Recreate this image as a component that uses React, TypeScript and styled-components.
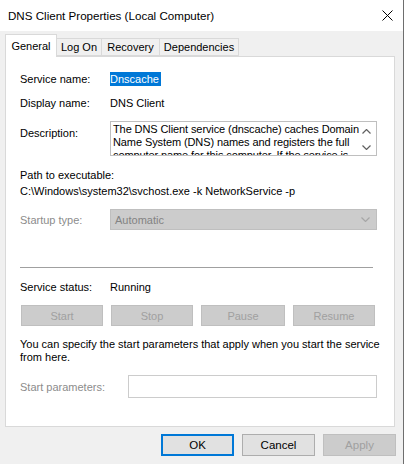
import styled, { createGlobalStyle } from "styled-components";

const GlobalStyle = createGlobalStyle`
  body {
    margin: 0;
    font-family: "Liberation Sans", Arial, sans-serif;
    font-size: 11px;
    color: #000;
  }
`;

const Window = styled.div`
  width: 403px;
  height: 464px;
  border-right: 1px solid #6e6e6e;
  background: #f0f0f0;
  display: flex;
  flex-direction: column;
  overflow: hidden;
`;

const TitleBar = styled.div`
  height: 31px;
  flex: none;
  background: #fff;
  display: flex;
  align-items: center;
  justify-content: space-between;
  padding-left: 8px;
  padding-right: 10px;
  font-size: 11.6px;
`;

const TabStrip = styled.div`
  display: flex;
  align-items: flex-end;
  height: 22px;
  margin-top: 3px;
  padding-left: 5px;
  position: relative;
  z-index: 1;
`;

const Tab = styled.div<{ $active?: boolean; $w: number }>`
  box-sizing: border-box;
  width: ${(p) => p.$w}px;
  height: ${(p) => (p.$active ? 23 : 18)}px;
  margin-bottom: ${(p) => (p.$active ? -1 : 0)}px;
  border: 1px solid #d9d9d9;
  border-bottom: ${(p) => (p.$active ? "none" : "1px solid #d9d9d9")};
  border-left: ${(p) => (p.$active ? "1px solid #d9d9d9" : "none")};
  background: ${(p) => (p.$active ? "#fff" : "#f0f0f0")};
  display: flex;
  align-items: ${(p) => (p.$active ? "flex-start" : "center")};
  padding-top: ${(p) => (p.$active ? 4 : 0)}px;
  justify-content: center;
  line-height: 14px;
`;

const Panel = styled.div`
  box-sizing: border-box;
  margin: 0 8px 0 5px;
  height: 371px;
  background: #fff;
  border: 1px solid #d9d9d9;
  padding: 15px 0 0 14px;
  display: flex;
  flex-direction: column;
`;

const Row = styled.div<{ $top?: number; $align?: string }>`
  display: flex;
  align-items: ${(p) => p.$align || "center"};
  margin-top: ${(p) => p.$top || 0}px;
  line-height: 14px;
`;

const Label = styled.div<{ $disabled?: boolean; $w?: number; $pad?: number }>`
  width: ${(p) => p.$w || 90}px;
  flex: none;
  color: ${(p) => (p.$disabled ? "#8c8c8c" : "#000")};
  padding-top: ${(p) => p.$pad || 0}px;
`;

const Selected = styled.span`
  background: #0078d7;
  color: #fff;
  padding: 0 2px 0 0;
  height: 14px;
`;

const Text = styled.div`
  line-height: 14px;
`;

const DescBox = styled.div`
  box-sizing: border-box;
  width: 267px;
  height: 35px;
  border: 1px solid #bfbfbf;
  display: flex;
  overflow: hidden;
`;

const DescText = styled.div`
  flex: 1;
  padding: 1px 0 0 2px;
  line-height: 13px;
  white-space: nowrap;
  letter-spacing: -0.1px;
  overflow: hidden;
`;

const ScrollBar = styled.div`
  width: 15px;
  flex: none;
  display: flex;
  flex-direction: column;
  justify-content: space-between;
  align-items: center;
  padding: 7px 2px 5px 0;
`;

const Combo = styled.div`
  box-sizing: border-box;
  width: 267px;
  height: 21px;
  background: #cccccc;
  border: 1px solid #bfbfbf;
  color: #838383;
  display: flex;
  align-items: center;
  justify-content: space-between;
  padding: 0 6px 0 4px;
`;

const Separator = styled.div`
  width: 353px;
  height: 1px;
  background: #a0a0a0;
  margin-top: 37px;
`;

const ButtonRow = styled.div`
  display: flex;
  gap: 8px;
  margin-top: 11px;
  padding-left: 1px;
`;

const DisabledButton = styled.div<{ $w: number }>`
  box-sizing: border-box;
  width: ${(p) => p.$w}px;
  height: 21px;
  background: #cccccc;
  border: 1px solid #bfbfbf;
  color: #a0a0a0;
  display: flex;
  align-items: center;
  justify-content: center;
`;

const Paragraph = styled.div`
  margin-top: 12px;
  line-height: 13px;
  width: 360px;
`;

const Input = styled.div`
  box-sizing: border-box;
  width: 249px;
  height: 23px;
  background: #fff;
  border: 1px solid #cccccc;
`;

const Footer = styled.div`
  display: flex;
  justify-content: flex-end;
  gap: 8px;
  padding: 7px 7px 0 0;
`;

const DialogButton = styled.div<{ $variant?: "default" | "disabled" }>`
  box-sizing: border-box;
  width: 73px;
  height: 22px;
  display: flex;
  align-items: center;
  justify-content: center;
  font-size: 11.5px;
  background: ${(p) => (p.$variant === "disabled" ? "#cccccc" : "#e1e1e1")};
  border: ${(p) =>
    p.$variant === "default"
      ? "2px solid #0078d7"
      : p.$variant === "disabled"
      ? "1px solid #bfbfbf"
      : "1px solid #adadad"};
  color: ${(p) => (p.$variant === "disabled" ? "#a0a0a0" : "#000")};
`;

const Chevron = ({ up, color }: { up?: boolean; color: string }) => (
  <svg width="9" height="5" viewBox="0 0 9 5">
    <path
      d={up ? "M0.5 4.5 L4.5 0.5 L8.5 4.5" : "M0.5 0.5 L4.5 4.5 L8.5 0.5"}
      fill="none"
      stroke={color}
      strokeWidth="1.2"
    />
  </svg>
);

export default function App() {
  return (
    <>
      <GlobalStyle />
      <Window>
        <TitleBar>
          <span>DNS Client Properties (Local Computer)</span>
          <svg width="11" height="11" viewBox="0 0 11 11">
            <path d="M0.5 0.5 L10.5 10.5 M10.5 0.5 L0.5 10.5" stroke="#000" strokeWidth="1" />
          </svg>
        </TitleBar>

        <TabStrip>
          <Tab $active $w={52}>General</Tab>
          <Tab $w={45}>Log On</Tab>
          <Tab $w={58}>Recovery</Tab>
          <Tab $w={79}>Dependencies</Tab>
        </TabStrip>

        <Panel>
          <Row>
            <Label>Service name:</Label>
            <Selected>Dnscache</Selected>
          </Row>
          <Row $top={10}>
            <Label>Display name:</Label>
            <Text>DNS Client</Text>
          </Row>
          <Row $top={11} $align="flex-start">
            <Label $pad={5}>Description:</Label>
            <DescBox>
              <DescText>
                The DNS Client service (dnscache) caches Domain
                <br />
                Name System (DNS) names and registers the full
                <br />
                computer name for this computer. If the service is
              </DescText>
              <ScrollBar>
                <Chevron up color="#606060" />
                <Chevron color="#606060" />
              </ScrollBar>
            </DescBox>
          </Row>
          <Row $top={12}>
            <Text>Path to executable:</Text>
          </Row>
          <Row $top={2}>
            <Text>C:\Windows\system32\svchost.exe -k NetworkService -p</Text>
          </Row>
          <Row $top={11}>
            <Label $disabled>Startup type:</Label>
            <Combo>
              <span>Automatic</span>
              <Chevron color="#a6a6a6" />
            </Combo>
          </Row>
          <Separator />
          <Row $top={12}>
            <Label>Service status:</Label>
            <Text>Running</Text>
          </Row>
          <ButtonRow>
            <DisabledButton $w={82}>Start</DisabledButton>
            <DisabledButton $w={82}>Stop</DisabledButton>
            <DisabledButton $w={84}>Pause</DisabledButton>
            <DisabledButton $w={82}>Resume</DisabledButton>
          </ButtonRow>
          <Paragraph>
            You can specify the start parameters that apply when you start the service from here.
          </Paragraph>
          <Row $top={11}>
            <Label $disabled $w={108}>Start parameters:</Label>
            <Input />
          </Row>
        </Panel>

        <Footer>
          <DialogButton $variant="default">OK</DialogButton>
          <DialogButton>Cancel</DialogButton>
          <DialogButton $variant="disabled">Apply</DialogButton>
        </Footer>
      </Window>
    </>
  );
}
